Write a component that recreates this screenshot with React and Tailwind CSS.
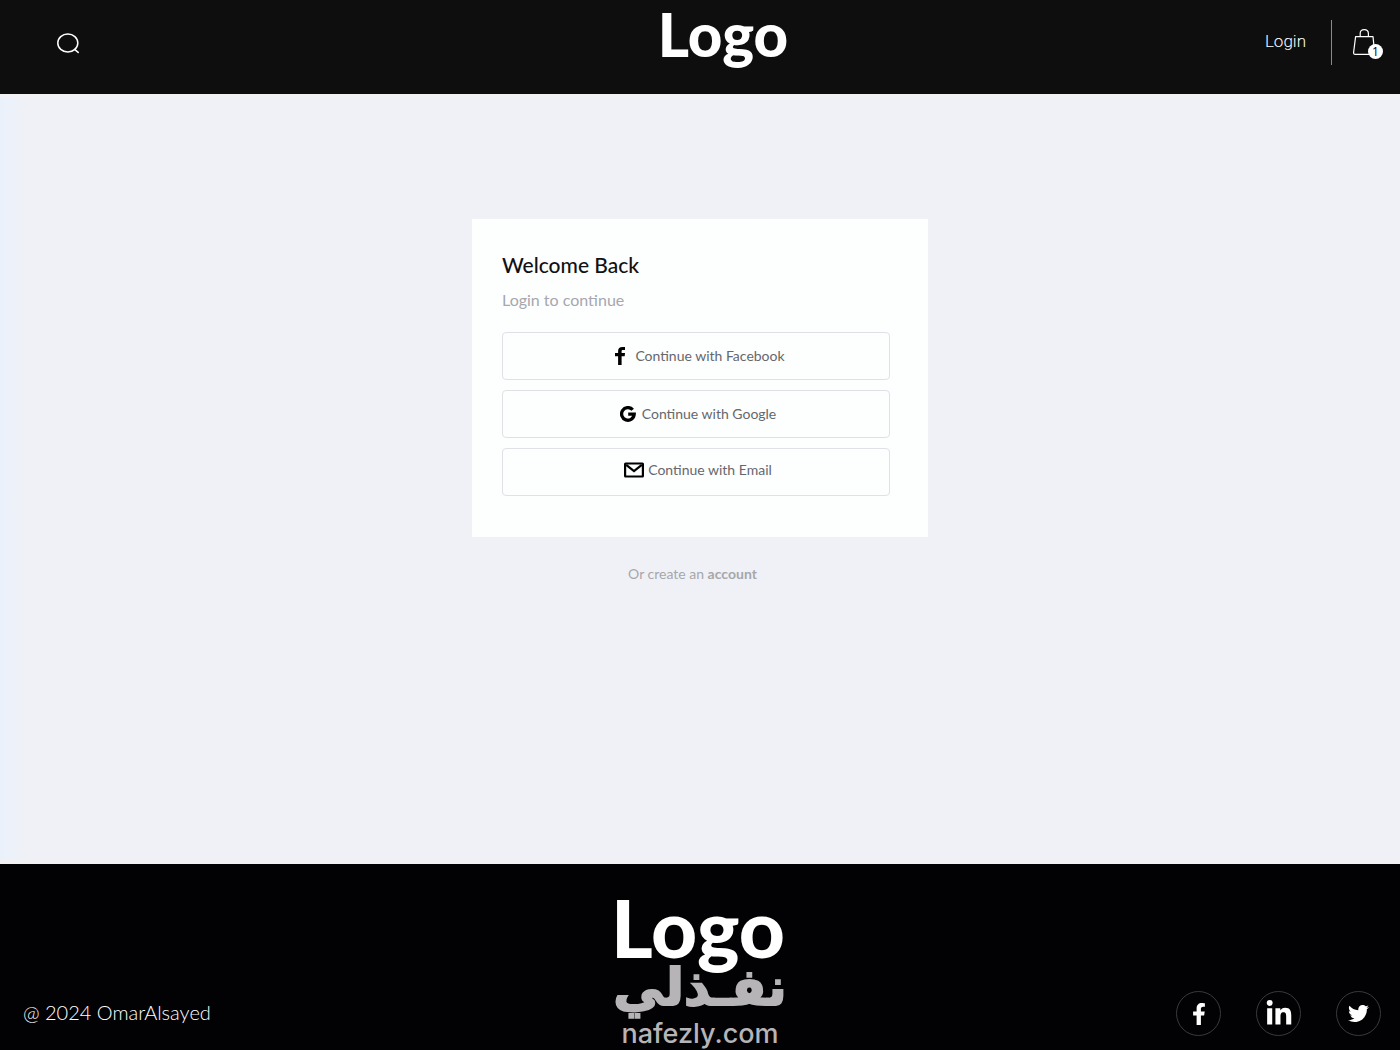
import React from "react";
import { FaFacebookF, FaLinkedinIn, FaTwitter } from "react-icons/fa";

function SearchIcon() {
  return (
    <svg className="h-6 w-6" viewBox="0 0 24 24" fill="none" stroke="white" strokeWidth="1.5" strokeLinecap="round" aria-hidden="true">
      <ellipse cx="11.8" cy="11" rx="10" ry="9" />
      <path d="M18.6 17.4 L22.2 20.4" />
    </svg>
  );
}

function BagIcon() {
  return (
    <svg className="h-7 w-6" viewBox="0 0 24 28" fill="none" stroke="white" strokeWidth="1.2" strokeLinejoin="round" aria-hidden="true">
      <path d="M3.6 8.6 H21 L22.6 24.4 Q22.7 26.4 20.8 26.4 H3.2 Q1.4 26.4 1.6 24.4 Z" />
      <path d="M8.2 8.4 V5.6 Q8.2 1.6 12.2 1.6 Q16.4 1.6 16.4 5.6 V8.4" />
    </svg>
  );
}

function FacebookGlyph() {
  return (
    <svg className="h-[18px] w-[10px]" viewBox="0 0 10 18" aria-hidden="true">
      <path d="M10 0 V3.1 H8.1 C7 3.1 6.6 3.5 6.6 4.5 V6.1 H10 L9.7 9.2 H6.6 V18 H3.1 V9.2 H0 V6.1 H3.1 V4.2 C3.1 1.4 4.6 0 7.4 0 Z" />
    </svg>
  );
}

function GoogleGlyph() {
  return (
    <svg className="h-4 w-4" viewBox="0 0 16 16" fill="none" stroke="black" strokeWidth="3.3" aria-hidden="true">
      <path d="M12.7 3.8 A6.3 6.3 0 1 0 14.2 8.2 H8.2" />
    </svg>
  );
}

function MailGlyph() {
  return (
    <svg className="h-4 w-5" viewBox="0 0 20 16" fill="none" stroke="black" strokeWidth="2.2" aria-hidden="true">
      <rect x="1.1" y="1.5" width="17.8" height="13" rx="0.4" />
      <path d="M2.2 2.8 L10 9.2 L17.8 2.8" />
    </svg>
  );
}

const providers = [
  { label: "Continue with Facebook", icon: <FacebookGlyph />, style: "gap-[10px] pl-2" },
  { label: "Continue with Google", icon: <GoogleGlyph />, style: "gap-1.5 pl-1" },
  { label: "Continue with Email", icon: <MailGlyph />, style: "gap-1 pb-1 pl-1" },
];

const socials = [
  { name: "Facebook", icon: <FaFacebookF className="h-[22px] w-[22px]" /> },
  { name: "LinkedIn", icon: <FaLinkedinIn className="h-7 w-7" /> },
  { name: "Twitter", icon: <FaTwitter className="h-[21px] w-[21px]" /> },
];

export default function App() {
  return (
    <div className="flex min-h-screen flex-col bg-[#f0f1f6] font-['Lato',sans-serif]">
      <header className="grid grid-cols-[1fr_auto_1fr] bg-[#0e0e0e] pb-[10px] text-white">
        <button type="button" aria-label="Search" className="ml-14 mt-8 h-6 w-6">
          <SearchIcon />
        </button>
        <a href="#home" className="ml-[46px] h-[84px] text-[60px] font-black leading-[68px]">
          Logo
        </a>
        <div className="flex items-start justify-end pr-[17px] pt-5">
          <a href="#login" className="mt-2 font-['Roboto',sans-serif] text-[17px] font-light leading-[26px]">
            Login
          </a>
          <div className="ml-[25px] h-[45px] w-px bg-[#8a8a8a]" />
          <button type="button" aria-label="Cart, 1 item" className="relative ml-5 mt-2 flex h-[31px] w-[31px] items-start">
            <BagIcon />
            <span className="absolute bottom-0 right-0 h-[15px] w-[15px] rounded-full bg-white text-center font-['Open_Sans',sans-serif] text-xs font-medium leading-[15px] text-black">
              1
            </span>
          </button>
        </div>
      </header>

      <main className="flex flex-1 flex-col items-center border-y-4 border-[#f2f2f4] bg-linear-to-r from-[#ebf1fc] from-0% via-[#f0f1f6] via-2% to-[#f0f1f6] pt-[121px]">
        <section className="w-full max-w-[456px] bg-[#fdfefe] pb-[41px] pl-[30px] pr-[38px] pt-8">
          <h1 className="text-[21px] font-medium leading-7 text-[#111114]">Welcome Back</h1>
          <p className="mt-2 text-base leading-[26px] text-[#a6a7af]">Login to continue</p>
          <div className="mt-[19px] flex flex-col gap-[10px]">
            {providers.map((p) => (
              <button
                key={p.label}
                type="button"
                className={`flex h-12 items-center justify-center rounded border border-[#dfe1e6] text-sm text-[#66676d] ${p.style}`}
              >
                {p.icon}
                <span>{p.label}</span>
              </button>
            ))}
          </div>
        </section>
        <p className="mr-[15px] mt-[27px] text-sm leading-5 text-[#a6a7ab]">
          Or create an <a href="#account" className="font-bold">account</a>
        </p>
      </main>

      <footer className="grid h-[186px] grid-cols-[1fr_auto_1fr] bg-[#020103] text-white">
        <p className="self-end pb-[25px] pl-[23px] text-xl font-light leading-[26px]">@ 2024 OmarAlsayed</p>
        <div className="flex flex-col items-center pt-4">
          <a href="#home" className="mr-1 h-[82px] text-[80px] font-black leading-[94px]">
            Logo
          </a>
          <div className="flex flex-col items-center text-[#b6b4b7]">
            <span lang="ar" dir="rtl" className="h-14 font-['DejaVu_Sans',sans-serif] text-[51px] font-bold leading-[52px] [-webkit-text-stroke:2px_#b6b4b7]">نفـذلي</span>
            <span className="font-['Inter',sans-serif] text-[27px] font-medium leading-8">nafezly.com</span>
          </div>
        </div>
        <nav aria-label="Social" className="flex items-end justify-end gap-[35px] pb-[14px] pr-[19px]">
          {socials.map((s) => (
            <a
              key={s.name}
              href={`#${s.name}`}
              aria-label={s.name}
              className="flex h-[45px] w-[45px] items-center justify-center rounded-full border border-[#3a3a3c]"
            >
              {s.icon}
            </a>
          ))}
        </nav>
      </footer>
    </div>
  );
}
